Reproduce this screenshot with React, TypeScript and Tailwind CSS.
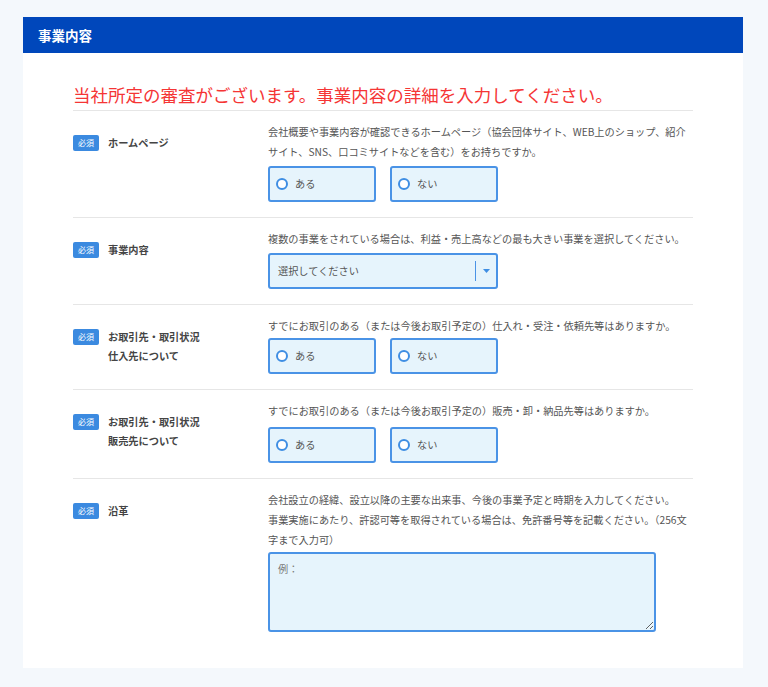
import React from "react";

const font = { fontFamily: '"Noto Sans CJK JP", "Noto Sans", sans-serif' };

function Badge() {
  return (
    <span className="mt-[1.5px] flex h-[16px] w-[26px] shrink-0 items-center justify-center rounded-[2px] bg-[#3b8ae0] text-[8px] leading-none text-white">
      必須
    </span>
  );
}

function Radio({ label }: { label: string }) {
  return (
    <label className="flex h-[36px] w-[108px] items-center gap-[7px] rounded-[3px] border-2 border-[#4a93e6] bg-[#e6f4fc] pl-[6px] text-[10.2px] text-[#555]">
      <span className="h-[12px] w-[12px] rounded-full border-2 border-[#3f8ee3] bg-white" />
      {label}
    </label>
  );
}

function YesNo({ className }: { className: string }) {
  return (
    <div className={`flex gap-[14px] ${className}`}>
      <Radio label="ある" />
      <Radio label="ない" />
    </div>
  );
}

function Row({
  label,
  children,
  last,
}: {
  label: React.ReactNode;
  children: React.ReactNode;
  last?: boolean;
}) {
  return (
    <div className={`flex ${last ? "pb-[36px]" : "border-b border-[#e6e6e6]"}`}>
      <div className="flex w-[195px] shrink-0 items-start gap-[9px] pt-[22px]">
        <Badge />
        <div className="text-[10.2px] font-bold leading-[19px] text-[#444]">{label}</div>
      </div>
      <div className={`flex-1 pt-[11px] ${last ? "" : "pb-[15px]"}`}>{children}</div>
    </div>
  );
}

function Desc({ children }: { children: React.ReactNode }) {
  return <p className="whitespace-nowrap text-[10.2px] leading-[20px] text-[#555]">{children}</p>;
}

export default function App() {
  return (
    <div className="min-h-[687px] bg-[#f4f8fc] pl-[23px] pr-[25px] pt-[17px] pb-[20px]" style={font}>
      <div className="bg-white">
        <div className="flex h-[36px] items-center bg-[#0047bb] pl-[15px] text-[13.5px] font-bold text-white">
          事業内容
        </div>
        <div className="px-[50px]">
          <h2 className="border-b border-[#e6e6e6] pb-[2px] pt-[29px] text-[17.5px] leading-[26px] text-[#f53535]">
            当社所定の審査がございます。事業内容の詳細を入力してください。
          </h2>

          <Row label="ホームページ">
            <Desc>
              会社概要や事業内容が確認できるホームページ（協会団体サイト、WEB上のショップ、紹介
              <br />
              サイト、SNS、口コミサイトなどを含む）をお持ちですか。
            </Desc>
            <YesNo className="mt-[4px]" />
          </Row>

          <Row label="事業内容">
            <Desc>複数の事業をされている場合は、利益・売上高などの最も大きい事業を選択してください。</Desc>
            <div className="mt-[4px] flex h-[36px] w-[230px] items-center rounded-[3px] border-2 border-[#4a93e6] bg-[#e6f4fc] text-[10.2px] text-[#555]">
              <span className="flex-1 pl-[8px]">選択してください</span>
              <span className="h-[20px] w-px bg-[#4a93e6]" />
              <span className="flex w-[20px] justify-center">
                <svg width="7" height="4" viewBox="0 0 7 4">
                  <path d="M0 0h7L3.5 4z" fill="#3f8ee3" />
                </svg>
              </span>
            </div>
          </Row>

          <Row
            label={
              <>
                お取引先・取引状況
                <br />
                仕入先について
              </>
            }
          >
            <Desc>すでにお取引のある（または今後お取引予定の）仕入れ・受注・依頼先等はありますか。</Desc>
            <YesNo className="mt-[2px]" />
          </Row>

          <Row
            label={
              <>
                お取引先・取引状況
                <br />
                販売先について
              </>
            }
          >
            <Desc>すでにお取引のある（または今後お取引予定の）販売・卸・納品先等はありますか。</Desc>
            <YesNo className="mt-[6px]" />
          </Row>

          <Row label="沿革" last>
            <Desc>
              会社設立の経緯、設立以降の主要な出来事、今後の事業予定と時期を入力してください。
              <br />
              事業実施にあたり、許認可等を取得されている場合は、免許番号等を記載ください。（256文
              <br />
              字まで入力可）
            </Desc>
            <textarea
              className="mt-[2px] block h-[80px] w-[388px] rounded-[3px] border-2 border-[#4a93e6] bg-[#e6f4fc] px-[8px] py-[6px] text-[10.2px] leading-[18px] text-[#555] outline-none placeholder:text-[#777]"
              placeholder="例："
              style={font}
            />
          </Row>
        </div>
      </div>
    </div>
  );
}
